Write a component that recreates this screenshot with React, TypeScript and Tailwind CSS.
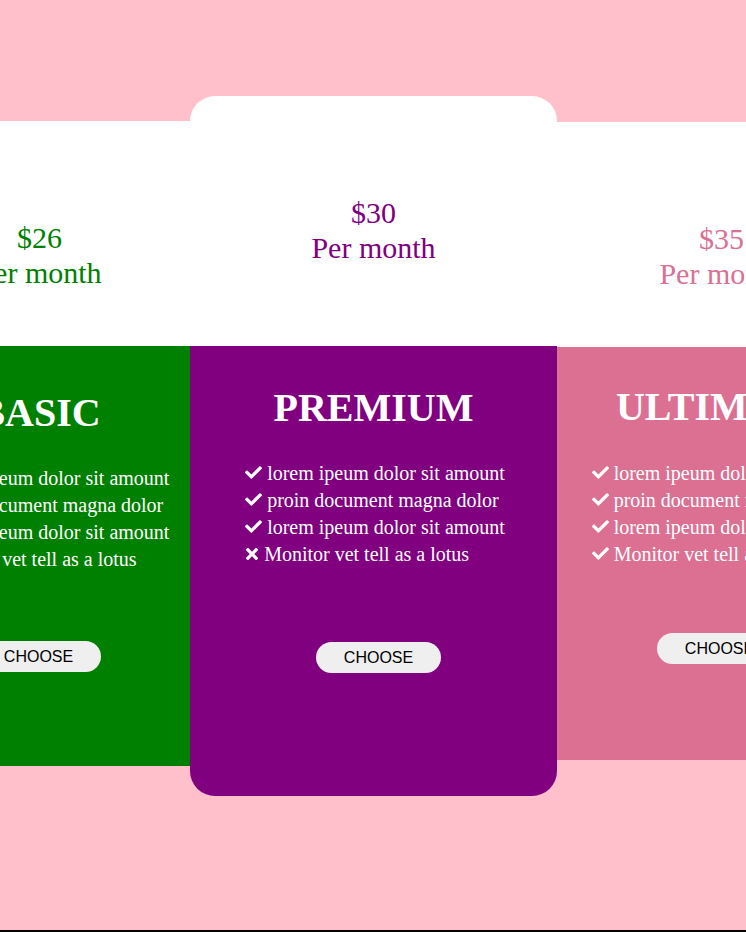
import React from "react";
import { FaCheck, FaTimes } from "react-icons/fa";

type Item = { text: string; ok: boolean };

const items = (last: boolean): Item[] => [
  { text: "lorem ipeum dolor sit amount", ok: true },
  { text: "proin document magna dolor", ok: true },
  { text: "lorem ipeum dolor sit amount", ok: true },
  { text: "Monitor vet tell as a lotus", ok: last },
];

function Feature({ it }: { it: Item }) {
  return (
    <li className="flex items-center h-[27px] whitespace-nowrap">
      {it.ok ? (
        <FaCheck size={17} className="shrink-0 mr-[5px]" />
      ) : (
        <FaTimes className="shrink-0 w-[12px] h-[18px] mr-[6px] ml-[1px]" />
      )}
      <span>{it.text}</span>
    </li>
  );
}

export default function App() {
  const serif = { fontFamily: '"Liberation Serif", "Times New Roman", serif' };
  return (
    <div
      className="w-[746px] h-[932px] bg-[#ffc0cb] overflow-hidden border-b-2 border-black box-border"
      style={serif}
    >
      <div className="flex items-start ml-[-111px] pt-[96px]">
        {/* BASIC */}
        <div className="w-[301px] shrink-0 mt-[25px] flex flex-col">
          <div className="h-[225px] bg-white pt-[100px] text-center text-[30px] leading-[34.5px] text-[#008000]">
            <div>$26</div>
            <div>Per month</div>
          </div>
          <div className="h-[420px] bg-[#008000] text-white pt-[44px] flex flex-col items-center">
            <h2 className="text-[40px] leading-[46px] font-bold">BASIC</h2>
            <ul className="mt-[28px] text-[20px]">
              {items(true).map((it, i) => (
                <Feature key={i} it={it} />
              ))}
            </ul>
            <button
              className="mt-[69px] h-[31px] w-[125px] rounded-full bg-[#efefef] text-[16px] text-black flex items-center justify-center ml-[-2px]"
              style={{ fontFamily: '"Liberation Sans", Arial, sans-serif' }}
            >
              CHOOSE
            </button>
          </div>
        </div>

        {/* PREMIUM */}
        <div className="w-[367px] shrink-0 rounded-[25px] overflow-hidden flex flex-col">
          <div className="h-[250px] bg-white pt-[100px] text-center text-[30px] leading-[34.5px] text-[#800080]">
            <div>$30</div>
            <div>Per month</div>
          </div>
          <div className="h-[450px] bg-[#800080] text-white pt-[39px] flex flex-col items-center">
            <h2 className="text-[40px] leading-[46px] font-bold">PREMIUM</h2>
            <ul className="mt-[28px] text-[20px] ml-[3px]">
              {items(false).map((it, i) => (
                <Feature key={i} it={it} />
              ))}
            </ul>
            <button
              className="mt-[75px] h-[31px] w-[125px] rounded-full bg-[#efefef] text-[16px] text-black flex items-center justify-center ml-[10px]"
              style={{ fontFamily: '"Liberation Sans", Arial, sans-serif' }}
            >
              CHOOSE
            </button>
          </div>
        </div>

        {/* ULTIMATE */}
        <div className="w-[329px] shrink-0 mt-[26px] flex flex-col">
          <div className="h-[225px] bg-white pt-[100px] text-center text-[30px] leading-[34.5px] text-[#db7093]">
            <div>$35</div>
            <div>Per month</div>
          </div>
          <div className="h-[413px] bg-[#db7093] text-white pt-[37px] flex flex-col items-center">
            <h2 className="text-[40px] leading-[46px] font-bold">ULTIMATE</h2>
            <ul className="mt-[29px] text-[20px]">
              {items(true).map((it, i) => (
                <Feature key={i} it={it} />
              ))}
            </ul>
            <button
              className="mt-[66px] h-[31px] w-[125px] rounded-full bg-[#efefef] text-[16px] text-black flex items-center justify-center ml-[-4px]"
              style={{ fontFamily: '"Liberation Sans", Arial, sans-serif' }}
            >
              CHOOSE
            </button>
          </div>
        </div>
      </div>
    </div>
  );
}
